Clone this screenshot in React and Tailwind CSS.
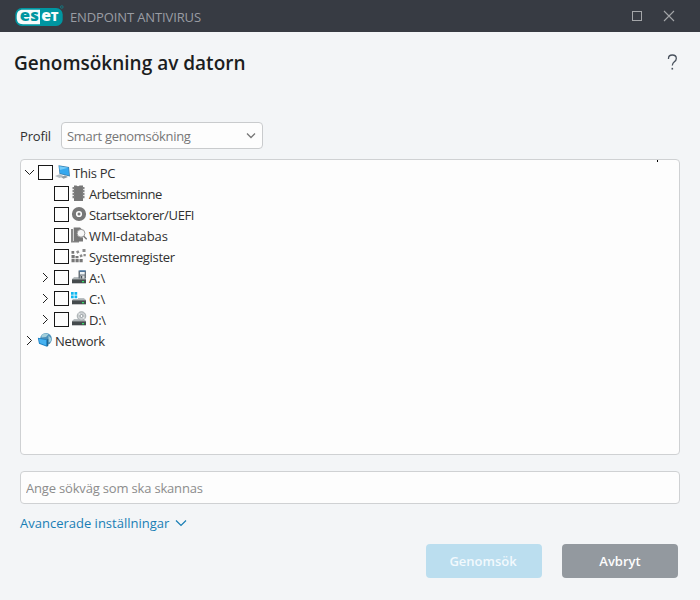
import React, { useState } from "react";

const treeItems = [
  { id: "memory", label: "Arbetsminne", icon: MemoryIcon, track: "tracking-[-0.5px]" },
  { id: "boot", label: "Startsektorer/UEFI", icon: BootIcon, track: "tracking-[-0.35px]" },
  { id: "wmi", label: "WMI-databas", icon: DatabaseIcon, track: "tracking-[-0.1px]" },
  { id: "registry", label: "Systemregister", icon: RegistryIcon, track: "tracking-[-0.32px]" },
  { id: "a", label: "A:\\", icon: FloppyDriveIcon, expandable: true, track: "tracking-[-0.1px]" },
  { id: "c", label: "C:\\", icon: SystemDriveIcon, expandable: true, track: "tracking-[-0.1px]" },
  { id: "d", label: "D:\\", icon: DiscDriveIcon, expandable: true, track: "tracking-[-0.25px]" },
];

function EsetLogo() {
  return (
    <svg width="50" height="24" viewBox="0 0 50 24" className="shrink-0">
      <rect x="0.3" y="4" width="47.400" height="18" rx="6.500" fill="#0096a1" />
      <path d="M8 5.800h17v14.400H8c-4.600 0-6.300-2-6.300-7.200S3.400 5.800 8 5.800Z" fill="#f7fbfb" />
      <g fontFamily="Open Sans, sans-serif" fontWeight="800" fontSize="16.500">
        <text x="4.800" y="17.400" textLength="19" lengthAdjust="spacingAndGlyphs" fill="#0096a1">es</text>
        <text x="26.200" y="17.400" textLength="9.800" lengthAdjust="spacingAndGlyphs" fill="#f7fbfb">e</text>
        <text x="35.800" y="17.400" fontSize="12.800" textLength="7.800" lengthAdjust="spacingAndGlyphs" fill="#f7fbfb">T</text>
      </g>
      <circle cx="46.800" cy="3" r="1.300" fill="none" stroke="#16747d" strokeWidth="1" />
    </svg>
  );
}

function Chevron({ open }) {
  return (
    <svg width="11" height="11" viewBox="0 0 11 11" fill="none" stroke="#1e1e1e" strokeWidth="1" className="mt-1 block">
      <path d={open ? "M1 3l4.500 4.500L10 3" : "M3 1l4.500 4.500L3 10"} />
    </svg>
  );
}

function ComputerIcon() {
  return (
    <svg width="16" height="16" viewBox="0 0 16 16" className="mt-px block">
      <path d="M0 12l4.500-1.700 4.500 2-4.500 1.600Z" fill="#b4bdc2" />
      <path d="M6 13l4-1.500 3 1.500-4.500 1.800Z" fill="#929da3" />
      <path d="M3.500 1.300L14 3l1 9.500-10.500-2.600Z" fill="#3a7fae" />
      <path d="M4.300 2.200l9 1.500.8 7.700-9-2.200Z" fill="#35a8ef" />
      <path d="M4.300 2.200l9 1.500L4.800 6Z" fill="#74cbf8" />
    </svg>
  );
}

function MemoryIcon() {
  return (
    <svg width="16" height="16" viewBox="0 0 16 16" fill="#777">
      <path d="M3 .5h2.500c.6 1 2.400 1 3 0H12V16H3Z" />
      <path d="M1.500 2h12v2.200h-12zM1.500 5h12v2.200h-12zM1.500 8h12v2.200h-12zM1.500 11h12v2.200h-12z" fill="#858585" />
      <path d="M3.500 2h8v12h-8z" />
    </svg>
  );
}

function BootIcon() {
  return (
    <svg width="16" height="16" viewBox="0 0 16 16">
      <circle cx="8" cy="8" r="5.100" fill="none" stroke="#777" strokeWidth="4" />
      <circle cx="8" cy="8" r="1.500" fill="#777" />
    </svg>
  );
}

function DatabaseIcon() {
  return (
    <svg width="16" height="16" viewBox="0 0 16 16">
      <path d="M0 2h2v12h6v1.500H0Z" fill="#888" />
      <path d="M2.700 0.500H9l3 3v11H2.700Z" fill="#777" />
      <path d="M12.500 9.500L16 13" stroke="#fdfdfd" strokeWidth="3" />
      <circle cx="10" cy="6.300" r="3.900" fill="#f8f8f8" stroke="#999" strokeWidth="1" />
      <path d="M12.700 9.200l3 3" stroke="#777" strokeWidth="1.500" />
    </svg>
  );
}

function RegistryIcon() {
  return (
    <svg width="16" height="16" viewBox="0 0 16 16" fill="#777">
      <path d="M.5 3h2.700v2.700H.5zM.5 7h3.200v3.200H.5zM.5 11h3.200v3.200H.5zM4.500 11h3.200v3.200H4.500zM8.500 11h3.200v3.200H8.500zM4.500 8h3v2.200h-3z" />
      <path d="M5 3.500l2.300-1.200 1.200 2.300-2.300 1.200ZM11.500 1h3v3h-3ZM8.500 7l2.400-.8.8 2.400-2.400.8ZM12.500 6h2.300v2.300h-2.300Z" fill="#8c8c8c" />
    </svg>
  );
}

function DriveBase() {
  return (
    <>
      <path d="M3 8h10l2 2.500H1Z" fill="#b8bec1" />
      <path d="M1 10.300h14v4H1Z" fill="#454b4d" />
      <path d="M1 10.300h14" stroke="#737a7d" strokeWidth=".7" />
      <path d="M11 12h2v1.300h-2z" fill="#35e36a" />
    </>
  );
}

function FloppyDriveIcon() {
  return (
    <svg width="16" height="16" viewBox="0 0 16 16">
      <DriveBase />
      <path d="M7.500 1.500H15v8H7.500Z" fill="#68727a" />
      <path d="M9 3h4.700v2.500H9Z" fill="#eef3f6" />
      <path d="M8.500 2h6" stroke="#3479b9" />
      <path d="M9.500 6.500h4v3h-4Z" fill="#d5d9db" />
      <path d="M10 7h1.200v2.500H10Z" fill="#495158" />
    </svg>
  );
}

function SystemDriveIcon() {
  return (
    <svg width="16" height="16" viewBox="0 0 16 16">
      <DriveBase />
      <path d="M0 1h7v8H0Z" fill="#fdfdfd" />
      <path d="M0 2h2.700v2.700H0zM3.500 2h2.700v2.700H3.500zM0 5.500h2.700v2.700H0zM3.500 5.500h2.700v2.700H3.500z" fill="#0fb6ef" />
    </svg>
  );
}

function DiscDriveIcon() {
  return (
    <svg width="16" height="16" viewBox="0 0 16 16">
      <DriveBase />
      <circle cx="10.500" cy="5" r="4.300" fill="#cdd1d3" stroke="#989fa2" strokeWidth=".8" />
      <path d="M10.500 5l-3-2.800M10.500 5l3 2.800" stroke="#f6f7f7" />
      <circle cx="10.500" cy="5" r="1.500" fill="#fff" stroke="#858d91" strokeWidth=".8" />
    </svg>
  );
}

function NetworkIcon() {
  return (
    <svg width="16" height="16" viewBox="0 0 16 16">
      <circle cx="9" cy="7" r="5.900" fill="#4a8fb9" />
      <path d="M4.500 3.500C6.500 1.300 9.500 1.200 11.500 2.200L9 5 4.500 5.500ZM11.500 3.500l2.800 3-.5 3-2.300 1Z" fill="#a3cfdb" />
      <path d="M.8 5.800l9.200 1.700v7.300L2 11.800Z" fill="#1a7fc2" />
      <path d="M1.700 6.700l7.500 1.400v5.500l-6.500-2.500Z" fill="#46b2f1" />
      <path d="M10 7.500l1.300-.6v6.900l-1.300 1Z" fill="#21658f" />
    </svg>
  );
}

function Checkbox({ label, checked, onChange }) {
  return (
    <input
      type="checkbox"
      aria-label={label}
      checked={checked}
      onChange={onChange}
      className="mt-[2px] h-[15px] w-[15px] shrink-0 appearance-none border border-[#171717] bg-[#fdfdfd] checked:bg-[#0078b4]"
    />
  );
}

export default function App() {
  const [checked, setChecked] = useState({});
  const [path, setPath] = useState("");
  const toggle = (id) => setChecked((prev) => ({ ...prev, [id]: !prev[id] }));

  return (
    <div className="flex h-[600px] w-[700px] flex-col bg-[#f3f5f7] font-['Open_Sans','Noto_Sans',sans-serif] text-[13px] text-[#303030]">
      {/* Title bar */}
      <header className="flex h-8 shrink-0 items-center bg-[#373b43] pl-[15px] text-[#a4a6a9]">
        <EsetLogo />
        <span className="ml-[5px] pt-px text-[13px] leading-4 tracking-[-0.12px] text-[#9a9da3]">ENDPOINT ANTIVIRUS</span>
        <div className="ml-auto flex items-center gap-[21px] pr-[25px]">
          <button aria-label="Maximera" className="h-[10px] w-[10px] border border-current" />
          <button aria-label="Stäng">
            <svg width="12" height="12" viewBox="0 0 12 12" stroke="currentColor" strokeWidth="1.100" className="block">
              <path d="M1 1l10 10M11 1L1 11" />
            </svg>
          </button>
        </div>
      </header>

      <main className="flex grow flex-col px-5">
        <div className="-mx-1.5 flex h-[62px] items-center justify-between pr-[8px]">
          <h1 className="text-[19px] leading-6 font-semibold text-[#1b1d20]">Genomsökning av datorn</h1>
          <button aria-label="Hjälp" className="pb-px text-[#48515d]">
            <svg width="11" height="17" viewBox="0 0 11 17" fill="none" stroke="currentColor" strokeWidth="1.300" className="block">
              <path d="M1.500 5V4.500C1.500 2.300 3 1 5.300 1s4 1.300 4 3.400c0 3.600-4 3.200-4 7.100" />
              <path d="M4.500 14.700h1.600" strokeWidth="1.700" />
            </svg>
          </button>
        </div>

        {/* Profile */}
        <div className="mt-7 flex h-[27px] items-center">
          <label className="w-[41px] pt-[2px] tracking-[-0.15px]">Profil</label>
          <button className="flex h-[27px] w-[202px] items-center justify-between rounded border border-[#c9cbcd] bg-[#fdfdfd] pr-[6px] pl-[5px] text-[#777]">
            <span className="pt-[2px] tracking-[-0.3px]">Smart genomsökning</span>
            <svg width="10" height="10" viewBox="0 0 10 10" fill="none" stroke="#777" strokeWidth="1.300">
              <path d="M1 2.500l4 4 4-4" />
            </svg>
          </button>
        </div>

        {/* Scan targets */}
        <div className="relative mt-[10px] h-[296px] shrink-0 rounded border border-[#cfd1d3] bg-[#fdfdfd] pt-[3px] pl-[3px] leading-[21px]">
          <span className="absolute top-0 right-[21px] h-[2px] w-px bg-black" />
          <div className="flex h-[21px] items-start">
            <Chevron open />
            <span className="w-[3px]" />
            <Checkbox label="This PC" checked={!!checked.pc} onChange={() => toggle("pc")} />
            <span className="w-[2px]" />
            <ComputerIcon />
            <span className="ml-[2px] tracking-[-0.25px]">This PC</span>
          </div>
          {treeItems.map(({ id, label, icon: Icon, expandable, track }) => (
            <div key={id} className="flex h-[21px] items-start pl-4">
              <span className="mr-[3px] w-[11px]">{expandable && <Chevron />}</span>
              <Checkbox label={label} checked={!!checked[id]} onChange={() => toggle(id)} />
              <span className="mt-px ml-[2px]"><Icon /></span>
              <span className={`ml-[2px] ${track}`}>{label}</span>
            </div>
          ))}
          <div className="flex h-[21px] items-start">
            <Chevron />
            <span className="mt-px ml-[2px]"><NetworkIcon /></span>
            <span className="ml-[2px] tracking-[-0.28px]">Network</span>
          </div>
        </div>

        <input
          value={path}
          onChange={(e) => setPath(e.target.value)}
          placeholder="Ange sökväg som ska skannas"
          className="mt-4 h-[33px] shrink-0 rounded border border-[#cfd1d3] bg-[#fdfdfd] px-[5px] pt-px tracking-[-0.18px] placeholder:text-[#8c8c8c]"
        />

        <button className="mt-[10px] flex h-5 items-center self-start text-[#187eb5]">
          Avancerade inställningar
          <svg width="12" height="10" viewBox="0 0 12 10" fill="none" stroke="currentColor" strokeWidth="1.200" className="mb-[2px] ml-[6px]">
            <path d="M1 2.500l5 5 5-5" />
          </svg>
        </button>

        <div className="mt-[10px] flex justify-end gap-5 pr-[2px] font-semibold text-[#fdfdfd]">
          <button className="h-[34px] w-[116px] rounded bg-[#bbdeef] pt-[2px] pr-[2px] text-[#f2f9fd]">Genomsök</button>
          <button className="h-[34px] w-[116px] rounded bg-[#93999f] pt-[2px]">Avbryt</button>
        </div>
      </main>
    </div>
  );
}
